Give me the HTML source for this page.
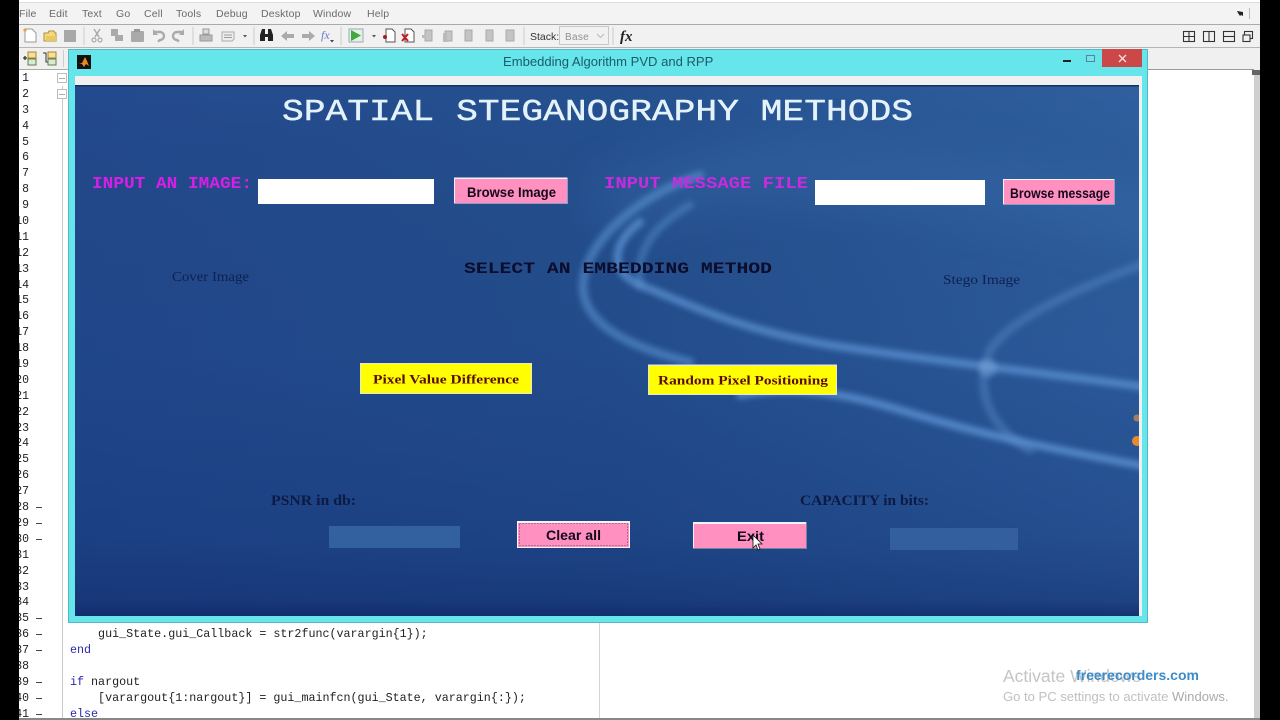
<!DOCTYPE html>
<html lang="en"><head><meta charset="utf-8"><title>Embedding Algorithm PVD and RPP</title>
<style>
*{box-sizing:border-box}
html,body{margin:0;padding:0;width:1280px;height:720px;overflow:hidden;background:#000;font-family:"Liberation Sans",sans-serif}
#root{position:relative;width:1280px;height:720px;overflow:hidden;background:#fff;filter:blur(.35px)}
.a{position:absolute}
#menu span{position:absolute;top:8px;font-size:10.5px;color:#6a6a6a;letter-spacing:.15px;line-height:13px}
#nums{position:absolute;left:10px;top:71px;width:19px;height:648px;overflow:hidden;text-align:right;font:11.5px/15.886px "Liberation Mono",monospace;color:#222;white-space:pre}
.d{position:absolute;left:36px;width:6px;height:1px;background:#444}
#code{position:absolute;left:70px;top:627px;font:11.7px/15.95px "Liberation Mono",monospace;color:#222;white-space:pre}
#code b{font-weight:normal;color:#2a2aa8}
</style></head><body>
<div id="root">
<div class="a" style="left:19px;top:0;width:1241px;height:720px;background:#fff"></div>

<!-- menu bar -->
<div class="a" style="left:19px;top:2px;width:1241px;height:22px;background:#f3f3f3;border-top:1px solid #ddd"></div>
<div id="menu">
<span style="left:19px">File</span><span style="left:49px">Edit</span><span style="left:82px">Text</span><span style="left:116px">Go</span><span style="left:144px">Cell</span><span style="left:176px">Tools</span><span style="left:216px">Debug</span><span style="left:261px">Desktop</span><span style="left:313px">Window</span><span style="left:367px">Help</span>
</div>
<!-- toolbar -->
<div class="a" style="left:19px;top:24px;width:1241px;height:24px;background:#f1f1f1;border-top:1px solid #aaa;border-bottom:1px solid #b5b5b5"></div>
<div class="a" style="left:19px;top:48px;width:1241px;height:22px;background:#f0f0f0"></div>
<div class="a" style="left:1148px;top:69px;width:106px;height:1px;background:#999"></div>
<div class="a" style="left:19px;top:69px;width:49px;height:1px;background:#aaa"></div>
<div class="a" style="left:1254px;top:70px;width:6px;height:650px;background:#cfcfcf"></div>
<div class="a" style="left:1252px;top:70px;width:8px;height:5px;background:#666"></div>

<!-- editor -->
<div id="nums">1
2
3
4
5
6
7
8
9
10
11
12
13
14
15
16
17
18
19
20
21
22
23
24
25
26
27
28
29
30
31
32
33
34
35
36
37
38
39
40
41</div>
<div class="d" style="top:507px"></div><div class="d" style="top:523px"></div><div class="d" style="top:539px"></div>
<div class="d" style="top:618px"></div><div class="d" style="top:634px"></div><div class="d" style="top:650px"></div>
<div class="d" style="top:682px"></div><div class="d" style="top:698px"></div><div class="d" style="top:714px"></div>
<div class="a" style="left:62px;top:86px;width:1px;height:634px;background:#c8c8c8"></div>
<div class="a" style="left:57px;top:73px;width:10px;height:10px;background:#fff;border:1px solid #bbb"></div>
<div class="a" style="left:59px;top:78px;width:6px;height:1px;background:#aaa"></div>
<div class="a" style="left:57px;top:89px;width:10px;height:10px;background:#fff;border:1px solid #bbb"></div>
<div class="a" style="left:59px;top:94px;width:6px;height:1px;background:#aaa"></div>
<div class="a" style="left:599px;top:623px;width:1px;height:97px;background:#d5d5d5"></div>
<div id="code">    gui_State.gui_Callback = str2func(varargin{1});
<b>end</b>

<b>if</b> nargout
    [varargout{1:nargout}] = gui_mainfcn(gui_State, varargin{:});
<b>else</b></div>
<div class="a" style="left:19px;top:718px;width:1241px;height:2px;background:#888"></div>

<!-- watermark -->
<div class="a" style="left:1003px;top:666px;font-size:17.5px;line-height:20px;color:#c4c4c4;white-space:nowrap">Activate Windows</div>
<div class="a" style="left:1003px;top:689px;font-size:13.05px;line-height:15px;color:#c0c0c0;white-space:nowrap">Go to PC settings to activate <span style="color:#aaa">Windows.</span></div>
<div class="a" style="left:1076px;top:667px;font-size:14px;line-height:17px;font-weight:bold;color:#3b8cc8;white-space:nowrap">freerecorders.com</div>

<!-- toolbar icons -->
<svg class="a" style="left:0;top:0" width="1280" height="72" viewBox="0 0 1280 72" font-family="Liberation Sans, sans-serif">
<path d="M25 29h7l4 4v9H25z" fill="#fff" stroke="#999"/><circle cx="25" cy="30" r="1.6" fill="#e8a040"/>
<path d="M44 33h4l1-2 5 0 1 2h1v8H44z" fill="#f2d880" stroke="#b09040"/><path d="M46 36h10v5H46z" fill="#e8c860"/>
<rect x="64" y="30" width="12" height="12" fill="#a8a8a8"/>
<path d="M84 27v18" stroke="#ccc"/>
<path d="M94 29l5 8M100 29l-5 8" stroke="#aaa" stroke-width="1.5"/><circle cx="94" cy="40" r="2" fill="none" stroke="#999"/><circle cx="100" cy="40" r="2" fill="none" stroke="#999"/>
<path d="M111 29h7v6h5v6h-8v-5h-4z" fill="#aaa"/>
<rect x="131" y="31" width="13" height="11" rx="1" fill="#aaa"/><rect x="134" y="29" width="6" height="3" fill="#999"/>
<path d="M154 32h6a3.500 3.500 0 0 1 0 8l-2 1.500" fill="none" stroke="#aaa" stroke-width="2.400"/><path d="M153 29v6h5z" fill="#aaa"/>
<path d="M183 32h-6a3.500 3.500 0 0 0 0 8l2 1.500" fill="none" stroke="#aaa" stroke-width="2.400"/><path d="M184 29v6h-5z" fill="#aaa"/>
<path d="M193 27v18" stroke="#ccc"/>
<path d="M203 29h6v5h-6z" fill="#ddd" stroke="#999"/><path d="M200 35h12v6h-12z" fill="#bbb" stroke="#999"/>
<path d="M222 32h12v7l-2 2h-10z" fill="#eee" stroke="#aaa"/><path d="M224 35h8M224 37.500h8" stroke="#999"/>
<path d="M243 35h4l-2 2.500z" fill="#555"/>
<path d="M254 27v18" stroke="#ccc"/>
<path d="M260 41v-6l2-6h3v5h3v-5h3l2 6v6h-5v-4h-3v4z" fill="#222"/>
<path d="M281 36l6-5v3h7v4h-7v3z" fill="#aaa"/><path d="M315 36l-6-5v3h-7v4h7v3z" fill="#aaa"/>
<text x="321" y="39" font-family="Liberation Serif, serif" font-style="italic" font-size="12" fill="#6a7ac8">fx</text><path d="M330 40h4l-2 2.500z" fill="#444"/>
<path d="M341 27v18" stroke="#ccc"/>
<rect x="349" y="29" width="14" height="13" fill="#e6f0e0" stroke="#9ab"/><path d="M351 30l10 5.500-10 5.500z" fill="#40a840"/>
<path d="M372 35h4l-2 2.500z" fill="#555"/>
<path d="M386 29h6l3 3v10h-9z" fill="#fff" stroke="#555"/><circle cx="385" cy="37" r="2" fill="#a02020"/>
<path d="M405 29h6l3 3v10h-9z" fill="#fff" stroke="#555"/><path d="M402 34l6 7M408 34l-6 7" stroke="#c02020" stroke-width="2"/>
<g fill="#c4c4c4" stroke="#aaa"><path d="M425 30h7v11h-7z"/><path d="M445 31h7v10h-7z"/><path d="M465 30h7v11h-7z"/><path d="M486 30h7v11h-7z"/><path d="M506 30h8v11h-8z"/></g>
<path d="M443 33h4v9h-4zM422 35h4v3h-4z" fill="#bbb"/>
<path d="M524 27v18" stroke="#ccc"/>
<text x="530" y="40" font-size="10.500" fill="#333">Stack:</text>
<rect x="559.500" y="26.500" width="49" height="18" fill="#f1f1f1" stroke="#c8c8c8"/>
<text x="565" y="40" font-size="10" letter-spacing=".3" fill="#909090">Base</text>
<path d="M597 34l3.500 3.500 3.500-3.500" fill="none" stroke="#bbb"/>
<path d="M613 27v18" stroke="#ccc"/>
<text x="620" y="41" font-family="Liberation Serif, serif" font-style="italic" font-weight="bold" font-size="15" fill="#222">fx</text>
<g fill="none" stroke="#333" stroke-width="1.100"><rect x="1183.500" y="31.500" width="11" height="10"/><path d="M1189 31.500v10M1183.500 36.500h11"/>
<rect x="1203.500" y="31.500" width="11" height="10"/><path d="M1209 31.500v10"/>
<rect x="1223.500" y="31.500" width="11" height="10"/><path d="M1223.500 36.500h11"/>
<rect x="1244.500" y="31.500" width="8" height="7"/><rect x="1243" y="35" width="7" height="6.500" fill="#f1f1f1"/></g>
<path d="M1237 11l6 1v4l-2-1-1 1-2-3z" fill="#222"/><path d="M1249.500 8v11" stroke="#bbb"/>
<path d="M23 58h4M25 56v4" stroke="#333" stroke-width="1.300"/><rect x="28" y="52" width="8" height="6" fill="#f2e0a0" stroke="#b08020"/><rect x="28" y="59" width="8" height="6" fill="#d8ead0" stroke="#608050"/>
<path d="M43 53h3v9h2" fill="none" stroke="#333"/><rect x="48" y="52" width="8" height="6" fill="#f2e0a0" stroke="#b08020"/><rect x="48" y="59" width="8" height="6" fill="#d8ead0" stroke="#608050"/>
<path d="M63.500 50v17" stroke="#ccc"/>
</svg>

<!-- Figure window -->
<div class="a" style="left:68px;top:49px;width:1080px;height:574px;background:#66e5ea;border:1px solid #55b8c4"></div>
<div class="a" style="left:75px;top:76px;width:1067px;height:540px;background:#f0f0f0"></div>
<div class="a" style="left:77px;top:55px;width:14px;height:14px;background:#111"></div>
<svg class="a" style="left:77px;top:55px" width="14" height="14" viewBox="0 0 14 14"><path d="M2 9l3-1 3-6 2 4 2 5-3-2-2 3-2-3z" fill="#e88a20"/></svg>
<div class="a" style="left:503px;top:54px;font-size:13.05px;line-height:16px;color:#1c5c68;white-space:nowrap">Embedding Algorithm PVD and RPP</div>
<div class="a" style="left:1063px;top:60px;width:8px;height:2px;background:#222"></div>
<div class="a" style="left:1086px;top:55px;width:9px;height:7px;border:1px solid #4a8a98;background:#7ae0e8"></div>
<div class="a" style="left:1102px;top:49px;width:40px;height:18px;background:#cc4848"></div>
<svg class="a" style="left:1118px;top:54px" width="9" height="9" viewBox="0 0 9 9"><path d="M1 1l7 7M8 1l-7 7" stroke="#f4e4e4" stroke-width="1.300"/></svg>

<!-- GUI panel -->
<svg class="a" style="left:75px;top:85px" width="1064" height="531" viewBox="75 85 1064 531" font-family="Liberation Serif, serif">
<defs>
<linearGradient id="g1" x1="0" y1="0" x2="1" y2="0"><stop offset="0" stop-color="#234a8e"/><stop offset=".5" stop-color="#25508f"/><stop offset="1" stop-color="#2f5f9f"/></linearGradient>
<linearGradient id="g2" x1="0" y1="0" x2="0" y2="1"><stop offset="0" stop-color="#000" stop-opacity="0"/><stop offset=".5" stop-color="#0a2468" stop-opacity=".1"/><stop offset=".85" stop-color="#0a2468" stop-opacity=".28"/><stop offset=".97" stop-color="#0a2060" stop-opacity=".45"/><stop offset="1" stop-color="#0a2060" stop-opacity=".7"/></linearGradient>
<filter id="b3" filterUnits="userSpaceOnUse" x="0" y="0" width="1280" height="720"><feGaussianBlur stdDeviation="3"/></filter>
<filter id="b6" filterUnits="userSpaceOnUse" x="0" y="0" width="1280" height="720"><feGaussianBlur stdDeviation="22"/></filter>
</defs>
<rect x="75" y="85" width="1064" height="531" fill="url(#g1)"/>
<rect x="75" y="85" width="1064" height="531" fill="url(#g2)"/>
<rect x="75" y="85" width="1064" height="1.500" fill="#16305f"/>
<g fill="none" stroke-linecap="round">
<path d="M620 200C760 150 960 170 1180 230" stroke="#3d70b0" stroke-width="60" opacity=".3" filter="url(#b6)"/>
<path d="M1160 389C1040 372 940 362 830 345C740 330 690 305 640 285C610 272 610 245 640 222" stroke="#6098d8" stroke-width="8" opacity=".7" filter="url(#b3)"/>
<path d="M1160 469C1060 450 1000 440 900 410C840 392 790 385 740 395" stroke="#6098d8" stroke-width="8" opacity=".75" filter="url(#b3)"/>
<path d="M700 175C640 195 585 240 583 285C582 320 620 345 690 362" stroke="#5a92d0" stroke-width="9" opacity=".6" filter="url(#b3)"/>
<path d="M690 205C655 225 635 250 640 285" stroke="#5a92d0" stroke-width="8" opacity=".45" filter="url(#b3)"/>
<path d="M1160 258C1070 290 1010 320 990 350C975 385 985 425 1030 450" stroke="#5f90cc" stroke-width="9" opacity=".4" filter="url(#b3)"/>
</g>
<circle cx="988" cy="368" r="9" fill="#7aa4dc" opacity=".5" filter="url(#b3)"/>
<circle cx="1137" cy="441" r="5" fill="#e88a30"/><circle cx="1137" cy="418" r="3.500" fill="#c08850" opacity=".8"/>

<!-- title + digital labels -->
<g font-family="Liberation Mono, monospace">
<text x="282" y="120" font-size="31" fill="#e4f3fb" stroke="#e4f3fb" stroke-width=".4" textLength="631" lengthAdjust="spacingAndGlyphs">SPATIAL STEGANOGRAPHY METHODS</text>
<text x="92" y="188" font-weight="bold" font-size="16.500" fill="#d81ee6" textLength="160" lengthAdjust="spacingAndGlyphs">INPUT AN IMAGE:</text>
<text x="604" y="188" font-weight="bold" font-size="16.500" fill="#c82ae0" textLength="204" lengthAdjust="spacingAndGlyphs">INPUT MESSAGE FILE</text>
<text x="464" y="273" font-weight="bold" font-size="15.500" fill="#0c0c2c" textLength="308" lengthAdjust="spacingAndGlyphs">SELECT AN EMBEDDING METHOD</text>
</g>

<text x="172" y="281" font-size="13.500" fill="#0e2050" textLength="77" lengthAdjust="spacingAndGlyphs">Cover Image</text>
<text x="943" y="284" font-size="14" fill="#0e2050" textLength="77" lengthAdjust="spacingAndGlyphs">Stego Image</text>
<text x="271" y="505" font-size="15" font-weight="bold" fill="#0c1a44" textLength="85" lengthAdjust="spacingAndGlyphs">PSNR in db:</text>
<text x="800" y="505" font-size="15" font-weight="bold" fill="#0c1a44" textLength="129" lengthAdjust="spacingAndGlyphs">CAPACITY in bits:</text>

<!-- inputs -->
<rect x="258" y="179" width="176" height="25" fill="#fff"/>
<rect x="815" y="180" width="170" height="25" fill="#fff"/>

<!-- pink buttons -->
<g font-family="Liberation Sans, sans-serif" font-weight="bold" fill="#12081e">
<rect x="454" y="177.500" width="114" height="26.500" fill="#8a9cc8"/><rect x="454" y="177.500" width="113" height="25.500" fill="#f0f4f8"/><rect x="455" y="179" width="112" height="24" fill="#ff90bf"/>
<text x="467" y="197" font-size="14" textLength="89" lengthAdjust="spacingAndGlyphs">Browse Image</text>
<rect x="1003" y="179" width="112" height="26" fill="#8a9cc8"/><rect x="1003" y="179" width="111" height="25" fill="#f0f4f8"/><rect x="1004" y="180" width="110" height="24" fill="#ff90bf"/>
<text x="1010" y="198" font-size="14" textLength="100" lengthAdjust="spacingAndGlyphs">Browse message</text>
<rect x="517" y="521" width="113" height="27" fill="#f2f4f8"/><rect x="518" y="523" width="111" height="24" fill="#ff90bf"/>
<rect x="519.500" y="523.500" width="108" height="22" fill="none" stroke="#201030" stroke-opacity=".6" stroke-width="1" stroke-dasharray="1 2"/>
<text x="546" y="540" font-size="14" textLength="55" lengthAdjust="spacingAndGlyphs">Clear all</text>
<rect x="693" y="522" width="114" height="27" fill="#76819c"/><rect x="693" y="522" width="113" height="26" fill="#f0f4f8"/><rect x="694" y="524" width="112" height="24" fill="#ff90bf"/>
<text x="737" y="541" font-size="14" textLength="27" lengthAdjust="spacingAndGlyphs">Exit</text>
</g>

<!-- yellow buttons -->
<g font-weight="bold" fill="#5a0c0c" font-size="13">
<rect x="360" y="363" width="172" height="31" fill="#e8e8d0"/><rect x="361" y="364" width="170" height="29" fill="#ffff00"/>
<text x="373" y="383.500" textLength="146" lengthAdjust="spacingAndGlyphs">Pixel Value Difference</text>
<rect x="648" y="364.500" width="189" height="30.500" fill="#e8e8d0"/><rect x="649" y="366" width="187" height="28" fill="#ffff00"/>
<text x="658" y="384.500" textLength="170" lengthAdjust="spacingAndGlyphs">Random Pixel Positioning</text>
</g>

<!-- readouts -->
<rect x="329" y="526" width="131" height="22" fill="#33609f"/>
<rect x="890" y="528" width="128" height="22" fill="#335f9e"/>

<!-- cursor -->
<path d="M753 535v13l3-3 2 5 2-1-2-5h4z" fill="#fff" stroke="#111" stroke-width=".8"/>
</svg>

<!-- recording black bars -->
<div class="a" style="left:0;top:0;width:19px;height:720px;background:#000"></div>
<div class="a" style="left:1260px;top:0;width:20px;height:720px;background:#000"></div>
</div>
</body></html>
